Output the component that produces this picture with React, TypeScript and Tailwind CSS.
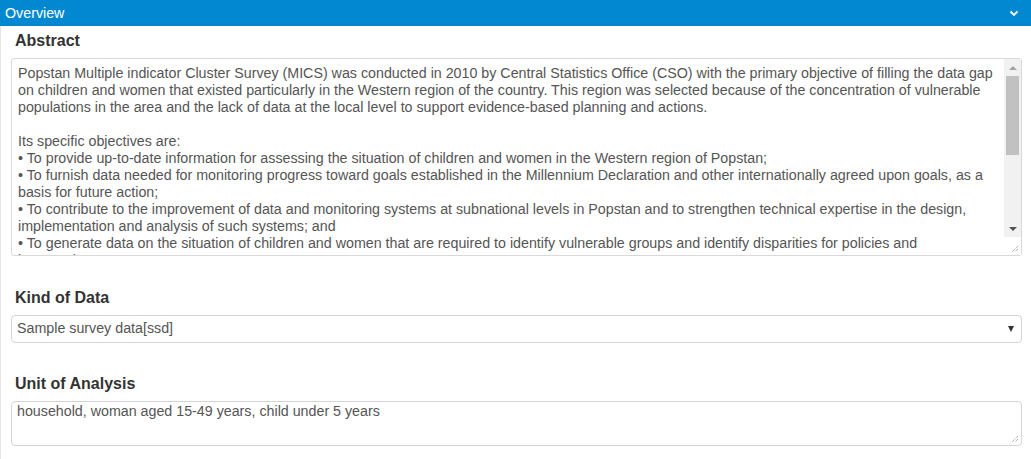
import React from "react";

const abstractText = `Popstan Multiple indicator Cluster Survey (MICS) was conducted in 2010 by Central Statistics Office (CSO) with the primary objective of filling the data gap
on children and women that existed particularly in the Western region of the country. This region was selected because of the concentration of vulnerable
populations in the area and the lack of data at the local level to support evidence-based planning and actions.

Its specific objectives are:
• To provide up-to-date information for assessing the situation of children and women in the Western region of Popstan;
• To furnish data needed for monitoring progress toward goals established in the Millennium Declaration and other internationally agreed upon goals, as a
basis for future action;
• To contribute to the improvement of data and monitoring systems at subnational levels in Popstan and to strengthen technical expertise in the design,
implementation and analysis of such systems; and
• To generate data on the situation of children and women that are required to identify vulnerable groups and identify disparities for policies and
interventions.`;

const ResizeGrip = () => (
  <svg width="9" height="9" viewBox="0 0 9 9" className="absolute bottom-[2px] right-[2px]">
    <path d="M8 2 L2 8 M8 5 L5 8" stroke="#8a8a8a" strokeWidth="1" strokeDasharray="1 1" />
  </svg>
);

const Label = ({ children, className = "" }: { children: React.ReactNode; className?: string }) => (
  <h3 className={`pl-[4px] text-[16px] font-bold leading-[20px] text-[#333] ${className}`}>{children}</h3>
);

export default function App() {
  return (
    <div className="w-[1031px] h-[459px] overflow-hidden bg-white font-['Liberation_Sans',Arial,sans-serif]">
      <div className="flex h-[26px] items-center justify-between bg-[#0288d1] pl-[5px] pr-[12px] text-white">
        <span className="text-[14.25px] leading-none">Overview</span>
        <svg width="10" height="7" viewBox="0 0 10 7">
          <path d="M1.5 1.5 L5 5 L8.5 1.5" stroke="white" strokeWidth="1.8" fill="none" />
        </svg>
      </div>

      <div className="border-l border-[#e6e6e6] pl-[10px] pr-[9px] h-[433px]">
        <Label className="pt-[5px] pb-[7px]">Abstract</Label>
        <div className="relative flex h-[198px] rounded-[3px] border border-[#d9d9d9] bg-white">
          <div className="flex-1 overflow-hidden whitespace-pre-line pl-[6px] pt-[6px] text-[14.25px] leading-[17px] text-[#555]">
            {abstractText}
          </div>
          <div className="flex w-[17px] flex-col bg-[#f1f1f1]">
            <div className="flex h-[17px] items-center justify-center">
              <div className="h-0 w-0 border-x-[4px] border-b-[4px] border-x-transparent border-b-[#a3a3a3]" />
            </div>
            <div className="mx-[2px] h-[79px] bg-[#c1c1c1]" />
            <div className="flex-1" />
            <div className="flex h-[17px] items-center justify-center">
              <div className="h-0 w-0 border-x-[4px] border-t-[4px] border-x-transparent border-t-[#505050]" />
            </div>
            <div className="relative h-[18px] bg-white">
              <ResizeGrip />
            </div>
          </div>
        </div>

        <Label className="pt-[32px] pb-[7px]">Kind of Data</Label>
        <div className="flex h-[28px] items-center justify-between rounded-[4px] border border-[#d4d4d4] pl-[5px] pr-[7px] text-[14.25px] text-[#555]">
          <span>Sample survey data[ssd]</span>
          <div className="h-0 w-0 border-x-[3.5px] border-t-[6px] border-x-transparent border-t-[#333]" />
        </div>

        <Label className="pt-[31px] pb-[7px]">Unit of Analysis</Label>
        <div className="relative h-[45px] rounded-[4px] border border-[#d4d4d4] pl-[5px] pt-[1px] text-[14.25px] leading-[17px] text-[#555]">
          household, woman aged 15-49 years, child under 5 years
          <ResizeGrip />
        </div>
      </div>
    </div>
  );
}
